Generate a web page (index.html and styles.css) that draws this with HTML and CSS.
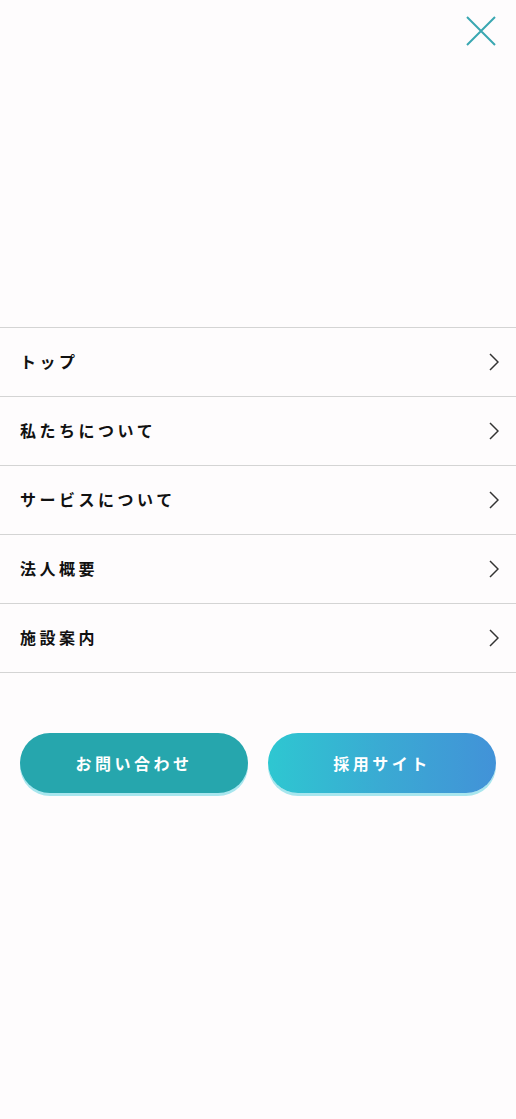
FILE: index.html
```html
<!DOCTYPE html>
<html lang="ja">
<head>
<meta charset="utf-8">
<link rel="stylesheet" href="styles.css">
</head>
<body>
<div class="page">
  <header class="top">
    <button class="close" aria-label="close">
      <svg width="30" height="30" viewBox="0 0 30 30"><path d="M1 1 L29 29 M29 1 L1 29" stroke="#3aa7b1" stroke-width="2" fill="none"/></svg>
    </button>
  </header>
  <nav class="menu">
    <a class="item" href="#"><span>トップ</span><svg class="chev" width="10" height="18" viewBox="0 0 10 18"><path d="M1 1 L9 9 L1 17" stroke="#333" stroke-width="1.5" fill="none"/></svg></a>
    <a class="item" href="#"><span>私たちについて</span><svg class="chev" width="10" height="18" viewBox="0 0 10 18"><path d="M1 1 L9 9 L1 17" stroke="#333" stroke-width="1.5" fill="none"/></svg></a>
    <a class="item" href="#"><span>サービスについて</span><svg class="chev" width="10" height="18" viewBox="0 0 10 18"><path d="M1 1 L9 9 L1 17" stroke="#333" stroke-width="1.5" fill="none"/></svg></a>
    <a class="item" href="#"><span>法人概要</span><svg class="chev" width="10" height="18" viewBox="0 0 10 18"><path d="M1 1 L9 9 L1 17" stroke="#333" stroke-width="1.5" fill="none"/></svg></a>
    <a class="item" href="#"><span>施設案内</span><svg class="chev" width="10" height="18" viewBox="0 0 10 18"><path d="M1 1 L9 9 L1 17" stroke="#333" stroke-width="1.5" fill="none"/></svg></a>
  </nav>
  <div class="buttons">
    <a class="btn contact" href="#">お問い合わせ</a>
    <a class="btn recruit" href="#">採用サイト</a>
  </div>
</div>
</body>
</html>
```
FILE: styles.css
```css
html, body {
  margin: 0;
  padding: 0;
  background: #fefcfd;
}
body {
  font-family: "Noto Sans CJK JP", "Noto Sans", sans-serif;
  color: #111;
}
.page {
  width: 516px;
  min-height: 1119px;
}
.top {
  height: 327px;
  display: flex;
  justify-content: flex-end;
  align-items: flex-start;
}
.close {
  margin: 16px 20px 0 0;
  padding: 0;
  border: none;
  background: none;
  width: 30px;
  height: 30px;
}
.close svg { display: block; }
.menu {
  border-top: 1px solid #d4d4d4;
}
.item {
  display: flex;
  align-items: center;
  justify-content: space-between;
  height: 68px;
  padding: 0 17px 0 20px;
  border-bottom: 1px solid #d4d4d4;
  text-decoration: none;
  color: #111;
  font-size: 16px;
  font-weight: 700;
  letter-spacing: 0.22em;
}
.item span { margin-top: -2px; }
.chev { display: block; }
.buttons {
  display: flex;
  gap: 20px;
  padding: 60px 20px 0;
}
.btn {
  flex: 1;
  height: 60px;
  border-radius: 30px;
  display: flex;
  align-items: center;
  justify-content: center;
  color: #fff;
  text-decoration: none;
  font-size: 16px;
  font-weight: 700;
  letter-spacing: 0.22em;
  box-shadow: 0 3px 0 #a8e6ee;
}
.btn { padding-bottom: 1px; box-sizing: border-box; }
.contact {
  background: #26a6ad;
}
.recruit {
  background: linear-gradient(90deg, #2ec7d1 0%, #3aaad3 50%, #4292d8 100%);
}
```
